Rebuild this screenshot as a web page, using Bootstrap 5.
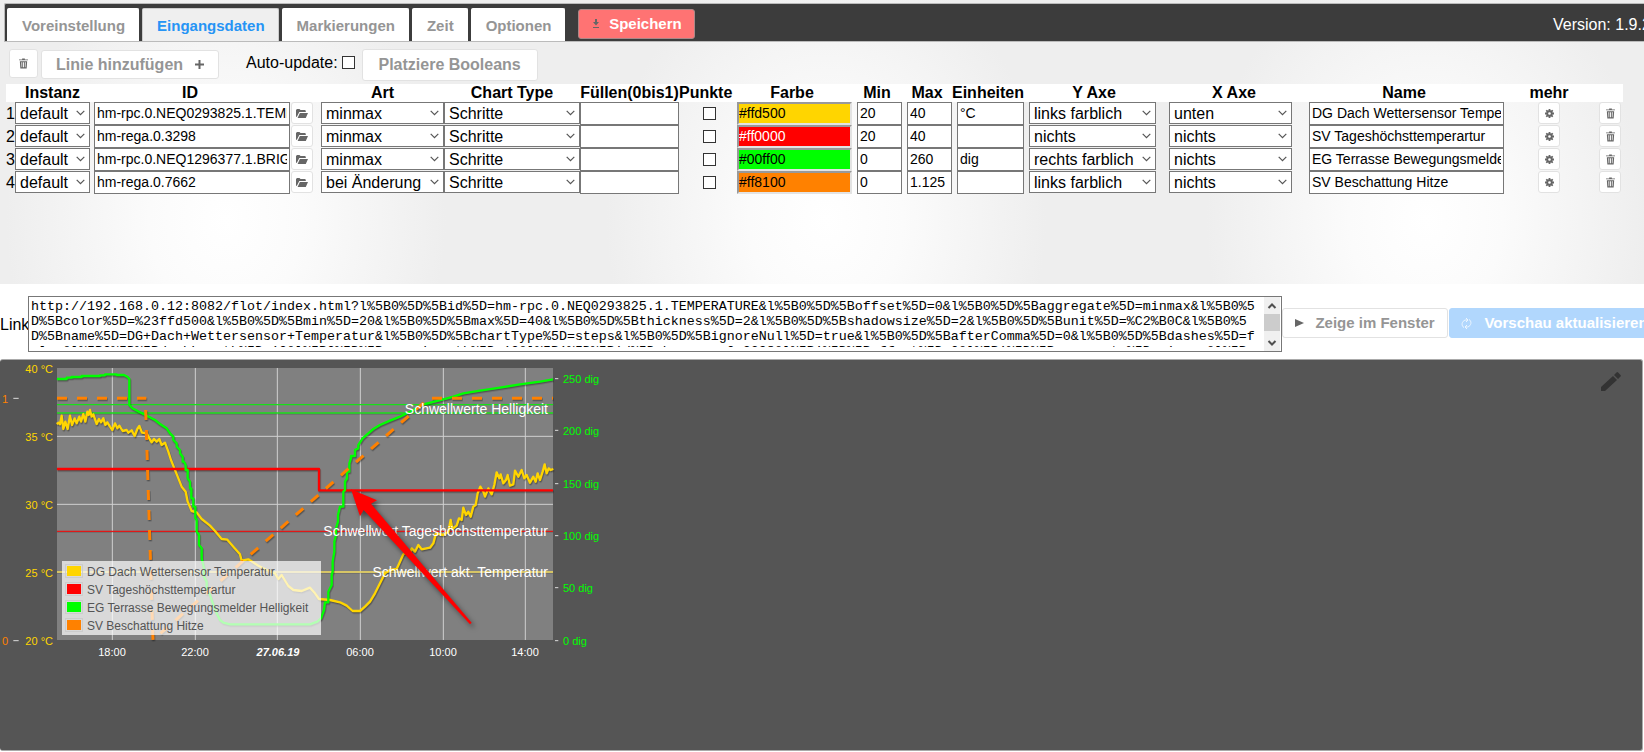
<!DOCTYPE html>
<html lang="de">
<head>
<meta charset="utf-8">
<meta name="viewport" content="width=device-width, initial-scale=1">
<title>Flot – Eingangsdaten</title>
<link href="https://cdn.jsdelivr.net/npm/bootstrap@5.3.0/dist/css/bootstrap.min.css" rel="stylesheet">
<style>
  body { font-family: "Liberation Sans", Arial, sans-serif; font-size: 16px; line-height: 18px; color: #000; background: #fff; overflow-x: hidden; }
  .settings { min-height: 284px; padding: 3px 0 0 4px; background: #eee radial-gradient(ellipse 220px 270px at 300px 220px, #fff 0, #fbfbfb 35%, #eee 100%) repeat-x calc(50% + 4px) top / 600px 600px; }
  .topbar { height: 39px; padding: 4px 0 0 2px; background: #3c3c3c; border: 1px solid #bbb; border-right: 0; border-radius: 2px 0 0 0; overflow: hidden; }
  .topbar .nav-tabs { gap: 3px; border: 0; }
  .topbar .nav-link { height: 33px; padding: 0 13px 0 14px; border: 1px solid #fff; border-bottom: 0; border-radius: 2px 2px 0 0; margin: 0; background: #fff; color: #959595; font-weight: 700; font-size: 15px; line-height: 33px; white-space: nowrap; }
  .topbar .nav-link.active { background: #efefef; border-color: #ccc; color: #2694f5; }
  .flatbtn { display: flex; align-items: center; justify-content: center; padding: 0; border: 1px solid #e2e2e2; border-radius: 3px; background: #fff; color: #959595; font-weight: 700; font-size: 15px; line-height: 18px; white-space: nowrap; flex-shrink: 0; }
  .flatbtn svg, .pencil svg { display: block; }
  .flatbtn svg { color: #666; fill: currentColor; }
  .save { width: 117px; height: 30px; margin: 1px 0 0 13px; background: #ff7373; border-color: #a88; color: #fff; gap: 9px; }
  .version { width: 91px; margin: 8px 0 0 auto; color: #fff; white-space: nowrap; flex-shrink: 0; }
  .toolbar { height: 42px; padding: 7px 0 0 5px; }
  .big { font-size: 16px; }
  .clear-all { width: 29px; height: 29px; }
  .add-line { width: 178px; height: 29px; margin: 1px 0 0 3px; gap: 12px; }
  .auto { margin: 5px 7px 0 27px; gap: 4px; }
  .auto .tick { margin-top: 2px; }
  .place { width: 176px; height: 32px; }
  .tick { appearance: none; width: 13px; height: 13px; border: 1px solid #333; background: #fff; margin: 0; display: block; }
  .tick:checked { background: #333; }
  .linetable { width: calc(100% - 23px); margin-left: 2px; table-layout: fixed; border-collapse: collapse; }
  .linetable thead { background: #fff; }
  .linetable th, .linetable td { padding: 0; height: 18px; white-space: nowrap; text-align: center; }
  .linetable td { height: 23px; vertical-align: top; line-height: 23px; text-align: left; }
  .linetable .inset { padding-left: 5px; }
  .linetable input[type=text] { display: block; width: 100%; height: 23px; padding: 0 2px 1px; border: 1px solid #777; background: #fff; color: #000; font-size: 14px; line-height: 20px; border-radius: 0; }
  .linetable input[type=text].swatch { height: 23px; padding: 0 1px 1px 0; border: 2px solid; border-color: #999 #e3e3e3 #e3e3e3 #999; }
  .linetable select { appearance: none; display: block; width: 100%; height: 22px; padding: 1px 0 0 4px; border: 1px solid #777; border-radius: 0; color: #000; line-height: 19px; background: #fff url("data:image/svg+xml,%3Csvg xmlns='http://www.w3.org/2000/svg' width='9' height='6'%3E%3Cpath d='M.7.8l3.8 3.8L8.300.8' fill='none' stroke='%23555' stroke-width='1.200'/%3E%3C/svg%3E") no-repeat right 4px center; }
  .linetable select.y-axis { width: 127px; }
  .linetable select.x-axis { width: 123px; }
  .linetable .tick { margin: 5px auto 0 24px; }
  .rowbtn { width: 22px; height: 22px; }
  .linkrow { padding-top: 12px; height: 75px; overflow: hidden; }
  .urlbox { height: 56px; border: 1px solid #777; padding: 2px 1px 2px 2px; background: #fff; min-width: 0; }
  .urlbox textarea { display: block; border: 0; padding: 0; margin: 0; height: 48px; resize: none; overflow: hidden; white-space: pre; font-family: "Liberation Mono", "Courier New", monospace; font-size: 10pt; line-height: 15px; color: #000; outline: 0; min-width: 0; }
  .bar { width: 16px; margin: -2px 0; background: #f0f0f0; }
  .bar i { height: 17px; background: #ccc; }
  .open-window { width: 166px; height: 30px; margin: 12px 1px 0 0; gap: 11px; }
  .refresh { width: 214px; height: 30px; margin: 12px -19px 0 0; background: #b1d7fd; border-color: #b1d7fd; color: #fff; gap: 12px; padding-right: 3px; }
  .preview { min-height: 392px; margin-right: 1px; background: #555; border: 1px solid #aaa; border-left: 0; border-radius: 3px; }
  .preview > svg { display: block; flex-shrink: 0; font-family: "Liberation Sans", Arial, sans-serif; }
  .pencil { padding: 0; border: 0; background: none; margin: 12px 21px 0 0; height: 20px; }
</style>
</head>
<body>
<svg class="d-none" aria-hidden="true">
  <symbol id="i-trash" viewBox="0 0 10 11"><path d="M3.500 0h3v1H10v1H0V1h3.500zM1 3h8v1l-.5 7h-7L1 4zm1.600 1.200.3 5.600h.7V4.200zm1.900 0v5.600h1V4.200zm2 0v5.600h.7l.3-5.600z" fill-rule="evenodd"/></symbol>
  <symbol id="i-folder" viewBox="0 0 12 9"><path d="M0 8V1l1-1h2.500l1 1H9l.8.8V3H3.300L1 7.500zM1.600 9l2.300-5H12L9.800 9z"/></symbol>
  <symbol id="i-gear" viewBox="0 0 10 10"><path d="M4 0h2v1.500l.8.300L8 .8 9.200 2l-1 1.200.3.800H10v2H8.500l-.3.800 1 1.200L8 9.200l-1.200-1-.8.300V10H4V8.500l-.8-.3L2 9.200.8 8l1-1.200-.3-.8H0V4h1.500l.3-.8-1-1.200L2 .8l1.200 1L4 1.500zm1 3.500A1.500 1.500 0 1 0 5 6.500 1.500 1.500 0 0 0 5 3.500z" fill-rule="evenodd"/></symbol>
</svg>

<main>
<section class="settings">
  <header class="topbar d-flex align-items-start">
    <ul class="nav nav-tabs flex-nowrap">
      <li class="nav-item"><button type="button" class="nav-link">Voreinstellung</button></li>
      <li class="nav-item"><button type="button" class="nav-link active">Eingangsdaten</button></li>
      <li class="nav-item"><button type="button" class="nav-link">Markierungen</button></li>
      <li class="nav-item"><button type="button" class="nav-link">Zeit</button></li>
      <li class="nav-item"><button type="button" class="nav-link">Optionen</button></li>
    </ul>
    <button type="button" class="flatbtn save"><svg width="8" height="10" viewBox="0 0 8 10"><path d="M3 0h2v3h2L4 6.500 1 3h2zM1 8h6v1H1z"/></svg>Speichern</button>
    <span class="version">Version: 1.9.2</span>
  </header>

  <div class="toolbar d-flex align-items-start">
    <button type="button" class="flatbtn clear-all" aria-label="Alle löschen"><svg width="9" height="11"><use href="#i-trash"/></svg></button>
    <button type="button" class="flatbtn big add-line">Linie hinzufügen<svg width="9" height="9" viewBox="0 0 9 9"><path d="M3.500 0h2v3.500H9v2H5.500V9h-2V5.500H0v-2h3.500z"/></svg></button>
    <div class="auto d-flex">
      <label for="auto">Auto-update:</label>
      <input type="checkbox" id="auto" class="tick flex-shrink-0">
    </div>
    <button type="button" class="flatbtn big place">Platziere Booleans</button>
  </div>

  <table class="linetable">
    <colgroup id="cols"></colgroup>
    <thead>
      <tr><th></th><th>Instanz</th><th>ID</th><th></th><th>Art</th><th>Chart Type</th><th>Füllen(0bis1)</th><th>Punkte</th><th>Farbe</th><th>Min</th><th>Max</th><th>Einheiten</th><th>Y Axe</th><th>X Axe</th><th>Name</th><th>mehr</th><th></th></tr>
    </thead>
    <tbody id="lines"></tbody>
  </table>
</section>

<section class="linkrow d-flex align-items-start">
  <label for="url" class="pt-3 mt-1" style="width:28px">Link</label>
  <div class="urlbox d-flex flex-grow-1">
    <textarea id="url" class="flex-grow-1" spellcheck="false">http://192.168.0.12:8082/flot/index.html?l%5B0%5D%5Bid%5D=hm-rpc.0.NEQ0293825.1.TEMPERATURE&amp;l%5B0%5D%5Boffset%5D=0&amp;l%5B0%5D%5Baggregate%5D=minmax&amp;l%5B0%5
D%5Bcolor%5D=%23ffd500&amp;l%5B0%5D%5Bmin%5D=20&amp;l%5B0%5D%5Bmax%5D=40&amp;l%5B0%5D%5Bthickness%5D=2&amp;l%5B0%5D%5Bshadowsize%5D=2&amp;l%5B0%5D%5Bunit%5D=%C2%B0C&amp;l%5B0%5
D%5Bname%5D=DG+Dach+Wettersensor+Temperatur&amp;l%5B0%5D%5BchartType%5D=steps&amp;l%5B0%5D%5BignoreNull%5D=true&amp;l%5B0%5D%5BafterComma%5D=0&amp;l%5B0%5D%5Bdashes%5D=f
alse&amp;l%5B0%5D%5BdashLength%5D=10&amp;l%5B0%5D%5BspaceLength%5D=10&amp;l%5B1%5D%5Bid%5D=hm-rega.0.3298&amp;l%5B1%5D%5Boffset%5D=0&amp;l%5B1%5D%5Baggregate%5D=minmax&amp;l%5B</textarea>
    <div class="bar d-flex flex-column" aria-hidden="true">
      <svg width="16" height="17" viewBox="0 0 16 17"><path d="M4.500 11 8 7.500 11.500 11" fill="none" stroke="#505050" stroke-width="2"/></svg>
      <i></i>
      <svg class="mt-auto" width="16" height="17" viewBox="0 0 16 17"><path d="M4.500 7 8 10.500 11.500 7" fill="none" stroke="#505050" stroke-width="2"/></svg>
    </div>
  </div>
  <button type="button" class="flatbtn open-window"><svg width="9" height="8" viewBox="0 0 9 8"><path d="M0 0l9 4-9 4z"/></svg>Zeige im Fenster</button>
  <button type="button" class="flatbtn refresh"><svg width="11" height="11" viewBox="0 0 11 11" style="color:#eef7ff"><path d="M3 9.500C0 8 .5 3 4.500 2H7M5 0l2 2-2 2M8 1.500C11 3 10.500 8 6.500 9H4M6 7L4 9l2 2" fill="none" stroke="currentColor"/></svg>Vorschau aktualisieren</button>
</section>

<section class="preview d-flex justify-content-between align-items-start">
  <svg width="620" height="310" viewBox="0 360 620 310" role="img" aria-label="Verlauf der Eingangsdaten">
    <rect x="57" y="368" width="496" height="272" fill="#808080"/>
    <g transform="translate(0 355) scale(.33333)" fill="none" stroke-linejoin="round">
      <path d="M337 39V855M586 39V855M832 39V855M1081 39V855M1330 39V855M1576 39V855M171 244H1659M171 448H1659M171 651H1659" stroke="#d0d0d0" stroke-width="3"/>
      <path d="M40 130h16M40 857h16M1665 71h10M1665 226h10M1665 386h10M1665 542h10M1665 698h10M1665 857h10" stroke="#ddd" stroke-width="3"/>
      <path d="M171 149H1659M171 174H1659" stroke="#18e018" stroke-width="4"/>
      <path d="M171 178H1659M171 532H1659M171 655H1659" stroke="#000" stroke-opacity=".15" stroke-width="3"/>
      <path d="M171 529H1659" stroke="#e01818" stroke-width="4"/>
      <path d="M171 651H1659" stroke="#e6cf50" stroke-width="4"/>
      <g style="filter:drop-shadow(2px 4px 2px rgba(0,0,0,.35))" stroke-width="7">
        <path stroke="#ffd500" d="M170 207L176 203 180 208 185 182 190 222 196 200 203 222 210 182 216 210 224 190 230 205 238 185 243 200 250 177 256 200 262 170 266 180 270 165 275 185 280 178 290 207 297 192 303 202 310 190 316 210 322 202 330 215 337 225 345 205 352 220 358 212 368 228 380 225 385 233 395 226 404 243 412 222 418 213 426 233 440 235 448 250 455 262 462 252 470 260 478 252 485 270 495 263 505 290 513 315 523 340 533 365 545 395 557 410 563 440 575 468 590 472 605 492 630 512 645 528 665 552 682 554 700 575 720 598 725 617 745 613 775 632 800 645 825 655 835 672 845 660 865 693 880 705 905 708 930 698 945 715 957 732 990 735 1020 742 1040 752 1058 768 1080 768 1095 755 1110 740 1125 715 1140 685 1155 655 1170 645 1190 642 1200 620 1210 598 1220 590 1228 598 1235 580 1245 590 1255 570 1265 583 1290 578 1300 565 1308 535 1330 540 1345 530 1352 495 1357 522 1370 512 1377 490 1385 495 1390 458 1398 480 1405 470 1412 485 1420 455 1427 450 1433 415 1441 395 1450 410 1455 425 1465 400 1475 418 1483 390 1490 352 1498 370 1502 358 1510 385 1518 375 1523 360 1530 392 1540 388 1545 347 1555 365 1565 345 1573 370 1580 360 1590 383 1600 365 1607 380 1613 355 1620 375 1628 350 1634 328 1640 355 1646 340 1652 345 1660 342"/>
        <path stroke="#f00" d="M171 342H957V406H1659"/>
        <path stroke="#0f0" d="M171 72H200V68H215V66H245V63H300V61H315V58H350V60H372L383 66 388 72V150L397 160 420 172 440 182 465 195 480 207 500 220 510 235 520 245V255L530 265V275L540 285V295L548 305V320H552L557 330V345H563V370L570 380V400H574V430H580V455H586V490L590 495V530L597 540V570L605 580V610L612 640V665L620 680V700L630 720 640 750 650 775 660 795 670 803 690 808H930L952 800 963 790 972 765 975 742H985V710L995 690V660L998 650V620L1003 590V560L1008 540V520L1014 500V480L1020 455H1030V410L1035 405V380L1041 370V350H1048V325L1053 310V303H1065V285L1075 280V270L1088 250 1105 235 1120 222 1140 210 1170 197 1200 185 1240 165 1270 148 1330 133 1360 125 1390 115 1440 107 1500 98 1560 88 1620 80 1659 73"/>
        <path stroke="#ff8100" stroke-width="9" stroke-dasharray="30 30" d="M171 130H439"/>
        <path stroke="#ff8100" stroke-width="9" stroke-dasharray="30 30" d="M437 165L459 855 1275 140"/>
        <path stroke="#ff8100" stroke-width="9" stroke-dasharray="30 30" d="M1296 130H1659"/>
      </g>
    </g>
    <g font-size="11">
      <g fill="#ffd500" text-anchor="end"><text x="53" y="373">40 °C</text><text x="53" y="441">35 °C</text><text x="53" y="509">30 °C</text><text x="53" y="577">25 °C</text><text x="53" y="645">20 °C</text></g>
      <g fill="#ff8100"><text x="2" y="403">1</text><text x="2" y="645">0</text></g>
      <g fill="#0f0"><text x="563" y="383">250 dig</text><text x="563" y="435">200 dig</text><text x="563" y="488">150 dig</text><text x="563" y="540">100 dig</text><text x="563" y="592">50 dig</text><text x="563" y="645">0 dig</text></g>
      <g fill="#fff" text-anchor="middle"><text x="112" y="656">18:00</text><text x="195" y="656">22:00</text><text x="278" y="656" font-weight="700" font-style="italic">27.06.19</text><text x="360" y="656">06:00</text><text x="443" y="656">10:00</text><text x="525" y="656">14:00</text></g>
    </g>
    <g font-size="14" fill="#fff" text-anchor="end"><text x="548" y="414">Schwellwerte Helligkeit</text><text x="548" y="536">Schwellwert Tageshöchsttemperatur</text><text x="548" y="577">Schwellwert akt. Temperatur</text></g>
    <rect x="62" y="561" width="259" height="74" fill="#fff" fill-opacity=".7"/>
    <g stroke="#ccc"><rect x="65.500" y="564.500" width="17" height="13" fill="none"/><rect x="65.500" y="582.500" width="17" height="13" fill="none"/><rect x="65.500" y="600.500" width="17" height="13" fill="none"/><rect x="65.500" y="618.500" width="17" height="13" fill="none"/></g>
    <rect x="67" y="566" width="14" height="10" fill="#ffd500"/><rect x="67" y="584" width="14" height="10" fill="#f00"/><rect x="67" y="602" width="14" height="10" fill="#0f0"/><rect x="67" y="620" width="14" height="10" fill="#ff8100"/>
    <g font-size="12" fill="#545454"><text x="87" y="576">DG Dach Wettersensor Temperatur</text><text x="87" y="594">SV Tageshöchsttemperartur</text><text x="87" y="612">EG Terrasse Bewegungsmelder Helligkeit</text><text x="87" y="630">SV Beschattung Hitze</text></g>
    <path transform="translate(0 355) scale(.33333)" d="M1053 403L1131 436 1113 446 1415 803 1410 808 1091 465 1080 484z" fill="#f00" style="filter:drop-shadow(8px 10px 8px rgba(0,0,0,.5))"/>
  </svg>
  <button type="button" class="pencil" aria-label="Bearbeiten"><svg width="20" height="20" viewBox="0 0 20 20" fill="#333"><path d="M0 19v-4L12 4l4 4L4 19zM13 3l2.500-2.500q.8-.8 1.600 0l2.400 2.400q.8.800 0 1.600L17 7z"/></svg></button>
</section>
</main>

<script src="https://cdn.jsdelivr.net/npm/bootstrap@5.3.0/dist/js/bootstrap.bundle.min.js"></script>
<script>
  // relative column widths of the line table
  const widths = [9, 75, 200, 31, 123, 136, 99, 53, 120, 50, 50, 72, 140, 140, 200, 90, 29];
  const total = widths.reduce((a, b) => a + b);
  document.getElementById('cols').innerHTML = widths.map(w => `<col style="width:${w / total * 100}%">`).join('');

  const lines = [
    { id: 'hm-rpc.0.NEQ0293825.1.TEMPERATURE', art: 'minmax', color: '#ffd500', ink: '#000', min: '20', max: '40', unit: '°C', y: 'links farblich', x: 'unten', name: 'DG Dach Wettersensor Temperatur' },
    { id: 'hm-rega.0.3298', art: 'minmax', color: '#ff0000', ink: '#fff', min: '20', max: '40', unit: '', y: 'nichts', x: 'nichts', name: 'SV Tageshöchsttemperartur' },
    { id: 'hm-rpc.0.NEQ1296377.1.BRIGHTNESS', art: 'minmax', color: '#00ff00', ink: '#000', min: '0', max: '260', unit: 'dig', y: 'rechts farblich', x: 'nichts', name: 'EG Terrasse Bewegungsmelder Helligkeit' },
    { id: 'hm-rega.0.7662', art: 'bei Änderung', color: '#ff8100', ink: '#000', min: '0', max: '1.125', unit: '', y: 'links farblich', x: 'nichts', name: 'SV Beschattung Hitze' }
  ];
  const text = (label, value, attrs = '') => `<input type="text" aria-label="${label}" value="${value}" ${attrs}>`;
  const pick = (label, value, cls = '') => `<select aria-label="${label}" class="${cls}"><option>${value}</option></select>`;
  const button = (label, icon, w, h, cls = '') => `<button type="button" class="flatbtn rowbtn ${cls}" aria-label="${label}"><svg width="${w}" height="${h}"><use href="#${icon}"/></svg></button>`;
  document.getElementById('lines').innerHTML = lines.map((l, i) => `<tr>
    <td>${i + 1}</td>
    <td>${pick('Instanz', 'default')}</td>
    <td class="ps-1">${text('ID', l.id)}</td>
    <td>${button('ID wählen', 'i-folder', 12, 9, 'ms-auto me-2')}</td>
    <td>${pick('Art', l.art)}</td>
    <td>${pick('Chart Type', 'Schritte')}</td>
    <td>${text('Füllen', '')}</td>
    <td><input type="checkbox" class="tick" aria-label="Punkte"></td>
    <td class="inset">${text('Farbe', l.color, `class="swatch" style="background-color:${l.color};color:${l.ink}"`)}</td>
    <td class="inset">${text('Min', l.min)}</td>
    <td class="inset">${text('Max', l.max)}</td>
    <td class="inset">${text('Einheiten', l.unit)}</td>
    <td class="inset">${pick('Y Axe', l.y, 'y-axis')}</td>
    <td class="inset">${pick('X Axe', l.x, 'x-axis')}</td>
    <td class="inset">${text('Name', l.name)}</td>
    <td>${button('mehr', 'i-gear', 9, 9, 'mx-auto')}</td>
    <td class="inset">${button('Löschen', 'i-trash', 9, 11)}</td>
  </tr>`).join('');
</script>
</body>
</html>
